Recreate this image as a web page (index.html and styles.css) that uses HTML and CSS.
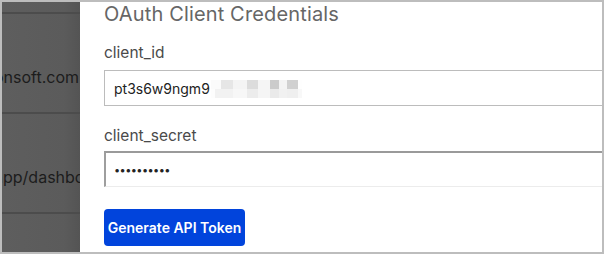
FILE: index.html
```html
<!DOCTYPE html>
<html>
<head>
<meta charset="utf-8">
<link rel="stylesheet" href="styles.css">
</head>
<body>
<div class="frame">
  <div class="backdrop">
    <div class="bd-row bd-first"></div>
    <div class="bd-row bd-right"><span>jsonsoft.com</span></div>
    <div class="bd-row bd-left"><span>app/dashboard</span></div>
    <div class="bd-row"></div>
  </div>
  <div class="modal">
    <h2 class="title">OAuth Client Credentials</h2>
    <label class="label">client_id</label>
    <div class="input input-id">
      <span class="value">pt3s6w9ngm9</span>
      <span class="blur">
        <span class="blur-row">
          <i style="background:#fbfbfb;width:10px"></i><i style="background:#e6e6e6;width:12px"></i><i style="background:#f4f4f4;width:14px"></i><i style="background:#dcdcdc;width:11px"></i><i style="background:#f5f5f5;width:12px"></i><i style="background:#cbcbcb;width:9px"></i><i style="background:#f3f3f3;width:8px"></i><i style="background:#d0d0d0;width:11px"></i><i style="background:#fefefe;width:4px"></i>
        </span>
        <span class="blur-row">
          <i style="background:#fdfdfd;width:4px"></i><i style="background:#f2f2f2;width:18px"></i><i style="background:#f7f7f7;width:14px"></i><i style="background:#ececec;width:11px"></i><i style="background:#f5f5f5;width:12px"></i><i style="background:#eaeaea;width:9px"></i><i style="background:#f1f1f1;width:8px"></i><i style="background:#efefef;width:11px"></i><i style="background:#f8f8f8;width:4px"></i>
        </span>
      </span>
    </div>
    <label class="label label-secret">client_secret</label>
    <div class="input input-secret">
      <span class="value dots">••••••••••</span>
    </div>
    <button class="btn">Generate API Token</button>
  </div>
</div>
</body>
</html>
```
FILE: styles.css
```css
* { box-sizing: border-box; }
html, body { margin: 0; padding: 0; background: #fff; }
.frame {
  width: 604px;
  height: 254px;
  border: 2px solid #bdbdbd;
  display: flex;
  overflow: hidden;
  font-family: "Inter", "Open Sans", sans-serif;
}
.backdrop {
  width: 78px;
  flex: none;
  background: linear-gradient(to right, #5e5e5e 0%, #5b5b5b 80%, #545454 100%);
  overflow: hidden;
  display: flex;
  flex-direction: column;
}
.bd-row {
  height: 100px;
  flex: none;
  border-bottom: 2px solid #4c4c4c;
  display: flex;
  align-items: flex-start;
  padding-top: 53px;
  white-space: nowrap;
  color: #1c1c1c;
  font-size: 16px;
  line-height: 20px;
}
.bd-first { height: 12px; padding-top: 0; }
.bd-right { justify-content: flex-end; padding-right: 1px; }
.bd-left span { margin-left: -8px; }
.modal {
  flex: 1;
  background: #fff;
  padding-left: 24px;
  display: flex;
  flex-direction: column;
  align-items: flex-start;
}
.title {
  margin: 0;
  font-weight: 400;
  font-size: 20px;
  letter-spacing: 0.15px;
  line-height: 26px;
  margin-top: -1px;
  color: #666;
}
.label {
  margin-top: 16px;
  font-size: 15.5px;
  line-height: 20px;
  color: #4a4a4a;
}
.label-secret { margin-top: 20px; }
.input {
  margin-top: 7px;
  width: calc(100% + 10px);
  height: 36px;
  display: flex;
  align-items: center;
  padding-left: 9px;
  font-size: 14px;
  color: #222;
  background: #fff;
}
.input-id {
  border: 1px solid #bcbcbc;
  border-right: none;
}
.input-secret {
  margin-top: 5px;
  border-top: 2px solid #9a9a9a;
  border-left: 2px solid #9e9e9e;
  border-bottom: 1px solid #ececec;
  padding-left: 8px;
}
.value { white-space: nowrap; }
.dots { letter-spacing: -0.6px; font-size: 11px; }
.blur { display: flex; flex-direction: column; margin-left: 1px; margin-top: 2px; }
.blur-row { display: flex; height: 9px; }
.blur i { display: block; height: 9px; }
.btn {
  margin-top: 22px;
  height: 37px;
  width: 141px;
  background: #0144dc;
  border: none;
  border-radius: 4px;
  color: #fff;
  font-family: inherit;
  font-weight: 600;
  font-size: 14px;
  padding: 0;
}
```
